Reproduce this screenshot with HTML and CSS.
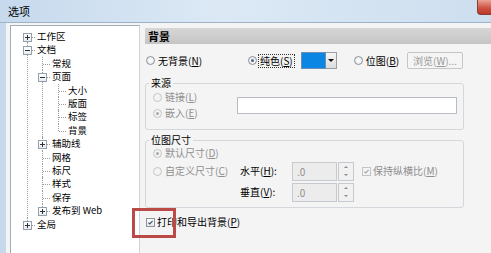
FILE: index.html
```html
<!DOCTYPE html>
<html lang="zh-CN">
<head>
    <meta charset="UTF-8">
    <title>选项</title>
    <link rel="stylesheet" href="styles.css">
</head>
<body>
<div class="window">
    <div class="titlebar">
        <span class="title">选项</span>
        <span class="close"></span>
    </div>
    <div class="frame">
        <div class="tree">
            <ul class="root">
                <li><span class="exp plus"></span>工作区</li>
                <li><span class="exp minus"></span>文档
                    <ul>
                        <li>常规</li>
                        <li><span class="exp minus"></span>页面
                            <ul>
                                <li>大小</li>
                                <li>版面</li>
                                <li>标签</li>
                                <li>背景</li>
                            </ul>
                        </li>
                        <li><span class="exp plus"></span>辅助线</li>
                        <li>网格</li>
                        <li>标尺</li>
                        <li>样式</li>
                        <li>保存</li>
                        <li><span class="exp plus"></span>发布到 Web</li>
                    </ul>
                </li>
                <li><span class="exp plus"></span>全局</li>
            </ul>
        </div>
        <div class="panel">
            <div class="panel-head">背景</div>
            <div class="content">
                <div class="bg-row">
                    <label class="radio opt-none"><span class="dot"></span>无背景(<u>N</u>)</label>
                    <label class="radio opt-solid"><span class="dot on"></span><span class="focus">纯色(<u>S</u>)</span></label>
                    <span class="swatch"></span><span class="drop"></span>
                    <label class="radio opt-bitmap"><span class="dot"></span>位图(<u>B</u>)</label>
                    <span class="btn">浏览(<u>W</u>)...</span>
                </div>

                <fieldset class="group src">
                    <legend>来源</legend>
                    <label class="radio off"><span class="dot"></span>链接(<u>L</u>)</label>
                    <span class="text-input"></span>
                    <label class="radio off"><span class="dot on"></span>嵌入(<u>E</u>)</label>
                </fieldset>

                <fieldset class="group size">
                    <legend>位图尺寸</legend>
                    <label class="radio off"><span class="dot on"></span>默认尺寸(<u>D</u>)</label>
                    <span></span><span></span><span></span>
                    <label class="radio off"><span class="dot"></span>自定义尺寸(<u>C</u>)</label>
                    <span class="lbl">水平(<u>H</u>):</span>
                    <div class="spin">
                        <span class="field">.0</span>
                        <span class="arrows"><i class="up"></i><i class="down"></i></span>
                    </div>
                    <label class="check off keep">
                        <span class="box"><svg viewBox="0 0 9 9"><path d="M1.8 4.6l1.8 1.8 3.6-4"/></svg></span>保持纵横比(<u>M</u>)
                    </label>
                    <span></span>
                    <span class="lbl">垂直(<u>V</u>):</span>
                    <div class="spin">
                        <span class="field">.0</span>
                        <span class="arrows"><i class="up"></i><i class="down"></i></span>
                    </div>
                </fieldset>

                <div class="print-row">
                    <label class="check">
                        <span class="box"><svg viewBox="0 0 9 9"><path d="M1.8 4.6l1.8 1.8 3.6-4"/></svg></span>打印和导出背景(<u>P</u>)
                    </label>
                    <span class="mark"></span>
                </div>
            </div>
        </div>
    </div>
</div>
</body>
</html>
```

FILE: styles.css
```css
body {
    margin: 0;
    width: 491px;
    height: 253px;
    overflow: hidden;
    font-family: "Noto Sans CJK SC", "Noto Sans", sans-serif;
    font-size: 10px;
    color: #000;
    background: #f4f4f4;
}
u {
    text-decoration: underline;
    text-underline-offset: 1px;
}
.window {
    display: flex;
    flex-direction: column;
    height: 253px;
}

/* title bar */
.titlebar {
    height: 22px;
    display: flex;
    align-items: center;
    border-bottom: 1px solid #9fb3c8;
    background: linear-gradient(90deg, #c6d9ed 0%, #dce9f5 45%, #cddeef 100%);
}
.title {
    margin-left: 8px;
    font-size: 11px;
}
.close {
    margin-left: auto;
    align-self: flex-start;
    width: 14px;
    height: 15px;
    box-sizing: border-box;
    border: 1px solid #8a3b33;
    border-top: none;
    border-right: none;
    border-radius: 0 0 0 4px;
    background: linear-gradient(#eaa395, #cc4f3f 60%, #b9382a);
}

.frame {
    flex: 1;
    display: flex;
    gap: 5px;
    min-height: 0;
    padding: 2px 0 0 4px;
    border-left: 6px solid #c6d8ec;
}

/* tree */
.tree {
    width: 130px;
    box-sizing: border-box;
    background: #fff;
    border: 1px solid #a3adb8;
    border-right-color: #cfd3d7;
    border-bottom: none;
    font-size: 9.5px;
}
.tree ul {
    list-style: none;
    margin: 0;
    padding: 0;
}
.tree .root {
    margin-left: 16px;
    padding-top: 4px;
}
.tree li {
    position: relative;
    padding-left: 10px;
    line-height: 13.4px;
    white-space: nowrap;
}
.tree li::before {
    content: "";
    position: absolute;
    left: 0;
    top: 0;
    bottom: 0;
    border-left: 1px dotted #9c9c9c;
}
.tree li:last-child::before {
    bottom: auto;
    height: 7px;
}
.tree .root > li:first-child::before {
    top: 7px;
}
.tree li::after {
    content: "";
    position: absolute;
    left: 1px;
    top: 7px;
    width: 7px;
    border-top: 1px dotted #9c9c9c;
}
.tree .root > li > ul {
    margin-left: 5px;
}
.tree ul ul ul {
    margin-left: 6px;
}
.exp {
    position: absolute;
    left: -4px;
    top: 3px;
    z-index: 1;
    width: 9px;
    height: 9px;
    box-sizing: border-box;
    border: 1px solid #93a0ae;
    background: linear-gradient(#fff, #e9ecef);
}
.exp::before {
    content: "";
    position: absolute;
    left: 1px;
    top: 3px;
    width: 5px;
    height: 1px;
    background: #333;
}
.exp.plus::after {
    content: "";
    position: absolute;
    left: 3px;
    top: 1px;
    width: 1px;
    height: 5px;
    background: #333;
}

/* right panel */
.panel {
    flex: 1;
    padding-top: 3px;
}
.panel-head {
    height: 16px;
    line-height: 16px;
    padding-left: 3px;
    font-size: 11px;
    font-weight: bold;
    background: linear-gradient(#d6d6d6, #c5c5c5);
}
.content {
    padding-right: 27px;
}

.radio,
.check {
    display: flex;
    align-items: center;
    line-height: 12px;
    white-space: nowrap;
}
.dot {
    position: relative;
    flex: none;
    width: 9px;
    height: 9px;
    margin-right: 3px;
    box-sizing: border-box;
    border: 1px solid #8d9096;
    border-radius: 50%;
    background: radial-gradient(#fff, #e2e4e7);
}
.dot.on::after {
    content: "";
    position: absolute;
    inset: 2px;
    border-radius: 50%;
    background: #4a6788;
}
.off {
    color: #8f8f8f;
}
.off .dot {
    border-color: #c3c5c8;
    background: #f3f3f3;
}
.off .dot.on::after {
    background: #a6a9ad;
}
.box {
    flex: none;
    width: 9px;
    height: 9px;
    margin-right: 2px;
    box-sizing: border-box;
    border: 1px solid #8e9298;
    background: linear-gradient(#fdfdfd, #e4e6e9);
}
.box svg {
    display: block;
    width: 7px;
    height: 7px;
}
.box path {
    fill: none;
    stroke: #3b4f6b;
    stroke-width: 1.4;
}
.off .box {
    border-color: #c2c4c7;
    background: #f4f4f4;
}
.off .box path {
    stroke: #a3a6aa;
}

/* background type row */
.bg-row {
    display: flex;
    align-items: center;
    height: 17px;
    margin-top: 8px;
    padding-left: 1px;
}
.opt-none {
    width: 102px;
}
.opt-solid .dot {
    margin-right: 1px;
}
.focus {
    padding: 0 1px;
    border: 1px dotted #333;
}
.swatch {
    width: 25px;
    height: 17px;
    margin-left: 6px;
    box-sizing: border-box;
    border: 1px solid #6d8fb3;
    background: #0b86e3;
}
.drop {
    position: relative;
    width: 11px;
    height: 17px;
    box-sizing: border-box;
    border: 1px solid #9a9ea4;
    border-left: none;
    background: linear-gradient(#f6f6f6, #dcdcdc);
}
.drop::after {
    content: "";
    position: absolute;
    left: 2px;
    top: 6px;
    border-left: 3px solid transparent;
    border-right: 3px solid transparent;
    border-top: 3px solid #111;
}
.opt-bitmap {
    margin-left: 17px;
}
.btn {
    margin-left: auto;
    margin-right: 1px;
    width: 56px;
    height: 17px;
    line-height: 15px;
    box-sizing: border-box;
    border: 1px solid #c4c6c9;
    border-radius: 2px;
    background: #f5f5f5;
    color: #9a9a9a;
    text-align: center;
}

/* group boxes */
.group {
    margin: 8px 0 0;
    padding: 0 6px 8px 7px;
    min-width: 0;
    border: 1px solid #d4d8dc;
    border-radius: 3px;
}
.group legend {
    margin-left: -4px;
    padding: 0 2px;
    line-height: 12px;
}
.src {
    display: grid;
    grid-template-columns: 84px 1fr;
    grid-template-rows: 16px 16px;
    align-items: center;
}
.src .text-input {
    grid-column: 2;
    grid-row: 1 / 3;
    height: 17px;
    box-sizing: border-box;
    border: 1px solid #b8bdc3;
    background: #fff;
}
.size {
    margin-top: 4px;
    padding-bottom: 5px;
    display: grid;
    grid-template-columns: 87px 52px 62px 1fr;
    grid-template-rows: 14px 20px 20px;
    row-gap: 1px;
    align-items: center;
}
.lbl {
    line-height: 12px;
}
.spin {
    display: flex;
    gap: 1px;
    height: 19px;
}
.field {
    width: 46px;
    box-sizing: border-box;
    padding-left: 4px;
    line-height: 17px;
    border: 1px solid #c6cacf;
    background: #ececec;
    color: #8f8f8f;
}
.arrows {
    width: 17px;
    box-sizing: border-box;
    border: 1px solid #c6cacf;
    background: #f1f1f1;
    display: flex;
    flex-direction: column;
    align-items: center;
    justify-content: space-around;
}
.arrows i {
    width: 0;
    height: 0;
    border-left: 2px solid transparent;
    border-right: 2px solid transparent;
}
.arrows .up {
    border-bottom: 2px solid #8a8a8a;
}
.arrows .down {
    border-top: 2px solid #8a8a8a;
}
.keep {
    margin-left: 8px;
}

/* print option */
.print-row {
    position: relative;
    display: flex;
    align-items: center;
    height: 14px;
    margin-top: 7px;
    padding-left: 1px;
}
.mark {
    position: absolute;
    left: -13px;
    top: -7px;
    width: 44px;
    height: 30px;
    box-sizing: border-box;
    border: 3px solid #b94a45;
}
```
